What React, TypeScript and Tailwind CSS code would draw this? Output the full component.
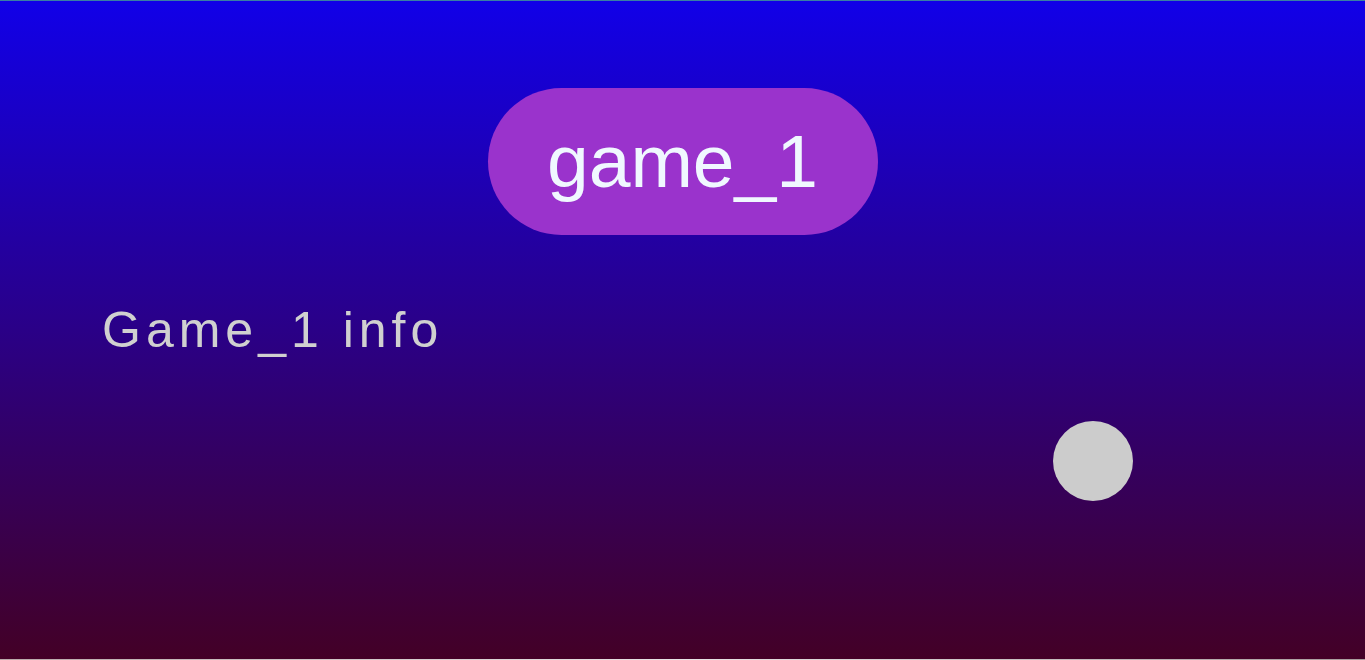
import React from "react";

export default function App() {
  return (
    <div className="w-[1365px] h-[660px] flex flex-col overflow-hidden" style={{ fontFamily: '"Liberation Sans", Arial, sans-serif' }}>
      <div className="h-px bg-[#3a7fa3]" />
      <main className="flex-1 flex flex-col bg-[linear-gradient(to_bottom,#1100e8,#430026)]">
        <div className="pt-[87px] flex justify-center">
          <div className="w-[390px] h-[147px] rounded-full bg-[#9a33cc] flex items-center justify-center">
            <span className="text-[75px] leading-none text-[#f0f8ff]">game_1</span>
          </div>
        </div>
        <p className="mt-[70px] pl-[102px] text-[50px] leading-none tracking-[5px] text-[#d0d0d0]">Game_1 info</p>
        <div className="mt-[66px] flex justify-end pr-[232px]">
          <div className="w-[80px] h-[80px] rounded-full bg-[#cccccc]" />
        </div>
      </main>
      <div className="h-px bg-gradient-to-r from-[#b9a9a9] via-[#e8e4e4] to-[#a89c9c]" />
    </div>
  );
}
